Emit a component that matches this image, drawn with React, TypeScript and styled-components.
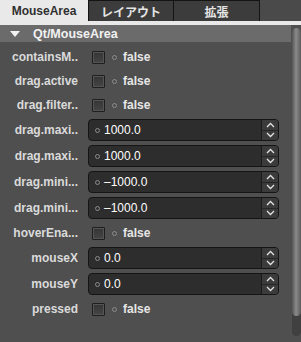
import React from "react"
import styled, { createGlobalStyle } from "styled-components"

const Global = createGlobalStyle`
  html, body { margin: 0; padding: 0; background: #4f4f4f; }
  body { font-family: "Liberation Sans", Arial, sans-serif; }
`

const Panel = styled.div`
  width: 301px;
  height: 342px;
  background: #4f4f4f;
  display: flex;
  flex-direction: column;
  overflow: hidden;
`

const TabBar = styled.div`
  display: flex;
  height: 21px;
  background: #4a4a4a;
  border-bottom: 4px solid #e9e9e9;
`

const Tab = styled.div<{ $active?: boolean; $w: number }>`
  width: ${p => p.$w}px;
  box-sizing: border-box;
  display: flex;
  align-items: center;
  justify-content: center;
  font-size: 12px;
  font-weight: bold;
  color: ${p => (p.$active ? "#303030" : "#e4e4e4")};
  background: ${p => (p.$active ? "#e9e9e9" : "#3c3c3c")};
  border: ${p => (p.$active ? "none" : "1px solid #141414")};
  border-bottom: none;
  font-family: "Liberation Sans", "Noto Sans CJK JP", sans-serif;
`

const Body = styled.div`
  flex: 1;
  display: flex;
  min-height: 0;
`

const Content = styled.div`
  flex: 1;
  display: flex;
  flex-direction: column;
`

const Header = styled.div`
  height: 17px;
  background: #6b6b6b;
  display: flex;
  align-items: center;
  padding-left: 10px;
  gap: 13px;
  font-size: 12.5px;
  font-weight: bold;
  color: #f2f2f2;
`

const Rows = styled.div`
  display: flex;
  flex-direction: column;
  padding-top: 3px;
`

const Row = styled.div<{ $h: number }>`
  height: ${p => p.$h}px;
  display: flex;
  align-items: center;
`

const Label = styled.div`
  width: 78px;
  text-align: right;
  font-size: 12px;
  font-weight: bold;
  color: #dadada;
  white-space: nowrap;
  margin-right: 10px;
`

const Check = styled.div`
  width: 11px;
  height: 11px;
  margin-left: 4px;
  margin-right: 7px;
  border: 1px solid #1e1e1e;
  background: linear-gradient(#353535, #454545);
  box-shadow: inset 0 0 0 1px #555;
  border-radius: 1px;
`

const Dot = styled.span`
  width: 3px;
  height: 3px;
  border-radius: 50%;
  border: 1px solid #8c8c8c;
  flex: none;
`

const BoolText = styled.span`
  font-size: 12px;
  font-weight: bold;
  color: #e6e6e6;
  margin-left: 6px;
`

const Spin = styled.div`
  width: 191px;
  height: 22px;
  box-sizing: border-box;
  background: #2d2d2d;
  border: 1px solid #151515;
  border-radius: 4px;
  display: flex;
  align-items: center;
  padding-left: 6px;
  overflow: hidden;
`

const SpinValue = styled.span`
  flex: 1;
  font-size: 12px;
  color: #ffffff;
  margin-left: 4px;
`

const SpinButtons = styled.div`
  width: 16px;
  height: 100%;
  display: flex;
  flex-direction: column;
  border-left: 1px solid #1a1a1a;
  background: #3b3b3b;
`

const SpinHalf = styled.div<{ $bottom?: boolean }>`
  flex: 1;
  display: flex;
  align-items: center;
  justify-content: center;
  border-top: ${p => (p.$bottom ? "1px solid #262626" : "none")};
`

const ScrollTrack = styled.div`
  width: 9px;
  margin-top: 3px;
  margin-bottom: 6px;
  margin-left: 1px;
  background: #404040;
  border-radius: 5px;
  display: flex;
  justify-content: center;
`

const Thumb = styled.div`
  width: 9px;
  height: 288px;
  border-radius: 5px;
  background: linear-gradient(to right, #555, #8a8a8a 45%, #5c5c5c);
`

const Chevron = ({ up }: { up?: boolean }) => (
  <svg width="9" height="6" viewBox="0 0 9 6">
    <path
      d={up ? "M1 5 L4.5 1.5 L8 5" : "M1 1 L4.5 4.5 L8 1"}
      fill="none"
      stroke="#e2e2e2"
      strokeWidth="1.3"
    />
  </svg>
)

type Prop = { name: string; kind: "bool" | "num"; value: string }

const props: Prop[] = [
  { name: "containsM..", kind: "bool", value: "false" },
  { name: "drag.active", kind: "bool", value: "false" },
  { name: "drag.filter..", kind: "bool", value: "false" },
  { name: "drag.maxi..", kind: "num", value: "1000.0" },
  { name: "drag.maxi..", kind: "num", value: "1000.0" },
  { name: "drag.mini...", kind: "num", value: "\u20131000.0" },
  { name: "drag.mini...", kind: "num", value: "\u20131000.0" },
  { name: "hoverEna...", kind: "bool", value: "false" },
  { name: "mouseX", kind: "num", value: "0.0" },
  { name: "mouseY", kind: "num", value: "0.0" },
  { name: "pressed", kind: "bool", value: "false" },
]

const App = () => (
  <Panel>
    <Global />
    <TabBar>
      <Tab $active $w={88}>MouseArea</Tab>
      <Tab $w={86}>レイアウト</Tab>
      <Tab $w={87} style={{ marginLeft: -1 }}>拡張</Tab>
    </TabBar>
    <Body>
      <Content>
        <Header>
          <svg width="10" height="6" viewBox="0 0 10 6">
            <path d="M0 0 H10 L5 6 Z" fill="#f2f2f2" />
          </svg>
          Qt/MouseArea
        </Header>
        <Rows>
          {props.map((p, i) =>
            p.kind === "bool" ? (
              <Row key={i} $h={24}>
                <Label>{p.name}</Label>
                <Check />
                <Dot />
                <BoolText>{p.value}</BoolText>
              </Row>
            ) : (
              <Row key={i} $h={26}>
                <Label>{p.name}</Label>
                <Spin>
                  <Dot />
                  <SpinValue>{p.value}</SpinValue>
                  <SpinButtons>
                    <SpinHalf>
                      <Chevron up />
                    </SpinHalf>
                    <SpinHalf $bottom>
                      <Chevron />
                    </SpinHalf>
                  </SpinButtons>
                </Spin>
              </Row>
            )
          )}
        </Rows>
      </Content>
      <ScrollTrack>
        <Thumb />
      </ScrollTrack>
    </Body>
  </Panel>
)

export default App
